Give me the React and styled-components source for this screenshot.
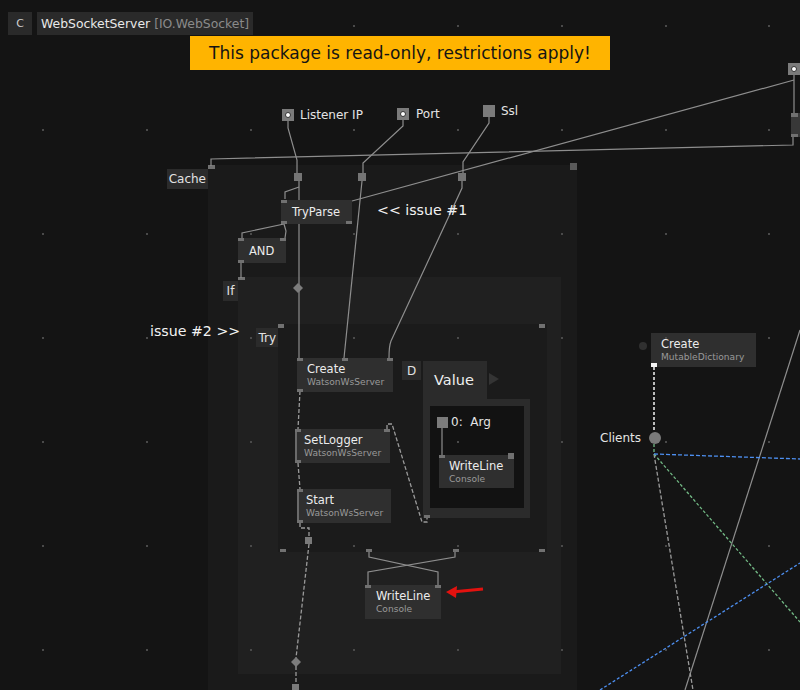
import React from 'react';
import styled, { createGlobalStyle } from 'styled-components';

const GlobalStyle = createGlobalStyle`
  html, body {
    margin: 0;
    padding: 0;
    background: #141414;
  }
  body {
    font-family: "DejaVu Sans", "Liberation Sans", sans-serif;
  }
`;

// ---- page / header ----

const Canvas = styled.div`
  position: relative;
  width: 800px;
  height: 690px;
  overflow: hidden;
  background: #141414;
  display: flex;
  flex-direction: column;
`;

const Header = styled.div`
  position: relative;
  z-index: 3;
  display: flex;
  gap: 5px;
  padding: 12px 8px 0;
`;

const ClassTag = styled.div`
  width: 24px;
  height: 23px;
  background: #2a2a2a;
  color: #cfcfcf;
  font-size: 11px;
  display: flex;
  align-items: center;
  justify-content: center;
`;

const TitleTag = styled.div`
  height: 23px;
  padding: 0 4px;
  background: #2a2a2a;
  color: #e8e8e8;
  font-size: 12.4px;
  display: flex;
  align-items: center;
  white-space: nowrap;

  span {
    color: #8a8a8a;
    margin-left: 4px;
  }
`;

const BannerRow = styled.div`
  position: relative;
  z-index: 3;
  display: flex;
  justify-content: center;
  margin-top: 1px;
`;

const Banner = styled.div`
  height: 34px;
  padding: 0 19px;
  background: #ffb400;
  color: #141414;
  font-size: 17px;
  display: flex;
  align-items: center;
  white-space: nowrap;
`;

// ---- regions (nested, laid out by padding) ----

const CacheRegion = styled.div`
  position: absolute;
  left: 208px;
  top: 165px;
  width: 369px;
  height: 540px;
  box-sizing: border-box;
  padding: 112px 0 0 30px;
  background: #1a1a1a;
`;

const IfRegion = styled.div`
  position: relative;
  width: 323px;
  height: 397px;
  box-sizing: border-box;
  padding: 47px 0 0 40px;
  background: #202020;
`;

const TryRegion = styled.div`
  position: relative;
  width: 269px;
  height: 228px;
  background: #1b1b1b;
`;

const RegionLabel = styled.div`
  position: absolute;
  right: 100%;
  top: 4px;
  height: ${p => p.$h || 20}px;
  min-width: 15px;
  padding: 0 ${p => p.$pad ?? 3}px;
  box-sizing: border-box;
  background: #2b2b2b;
  color: #e2e2e2;
  font-size: 12px;
  display: flex;
  align-items: center;
  justify-content: center;
`;

const EdgePins = styled.div`
  position: absolute;
  left: 0;
  right: 0;
  ${p => (p.$bottom ? 'bottom: 0;' : 'top: 0;')}
  padding: 0 ${p => p.$padR ?? 0}px 0 ${p => p.$padL ?? 0}px;
  display: flex;
  justify-content: ${p => p.$justify || 'space-between'};
  align-items: ${p => (p.$bottom ? 'flex-end' : 'flex-start')};
`;

const Pin = styled.div`
  flex: none;
  width: ${p => p.$w || 6}px;
  height: ${p => p.$h || 3}px;
  margin-top: ${p => p.$lift || 0}px;
  background: ${p => p.$c || '#717171'};
`;

const LoosePin = styled(Pin)`
  position: absolute;
  left: ${p => p.$x}px;
  top: ${p => p.$y}px;
`;

const ValueRow = styled.div`
  position: absolute;
  left: 124px;
  top: 37px;
  display: flex;
  align-items: flex-start;
  gap: 2px;
`;

const DefTag = styled.div`
  width: 19px;
  height: 19px;
  background: #2b2b2b;
  color: #e2e2e2;
  font-size: 12px;
  display: flex;
  align-items: center;
  justify-content: center;
`;

const ValueBox = styled.div`
  display: flex;
  flex-direction: column;
`;

const ValueHead = styled.div`
  position: relative;
  width: 64px;
  height: 38px;
  box-sizing: border-box;
  padding-left: 11px;
  background: #2b2b2b;
  color: #efefef;
  font-size: 14.5px;
  display: flex;
  align-items: center;

  &::after {
    content: '';
    position: absolute;
    left: 66px;
    top: 12px;
    border-left: 10px solid #343434;
    border-top: 6px solid transparent;
    border-bottom: 6px solid transparent;
  }
`;

const ValueFrame = styled.div`
  position: relative;
  width: 107px;
  height: 119px;
  box-sizing: border-box;
  padding: 7px 6px 10px 7px;
  background: #2b2b2b;
`;

const ValueInner = styled.div`
  width: 100%;
  height: 100%;
  background: #121212;
`;

// ---- nodes and pads on the canvas ----

const Node = styled.div`
  position: absolute;
  left: ${p => p.$x}px;
  top: ${p => p.$y}px;
  width: ${p => p.$w}px;
  height: ${p => p.$h}px;
  background: ${p => p.$bg || '#2f2f2f'};
  box-sizing: border-box;
  padding-left: ${p => p.$pad ?? 10}px;
  box-shadow: ${p => (p.$bar ? 'inset 2px 0 0 #6a6a6a' : 'none')};
  display: flex;
  flex-direction: column;
  justify-content: center;
`;

const NodeTitle = styled.div`
  font-size: 11.5px;
  line-height: 14px;
  color: #ececec;
  white-space: nowrap;
`;

const NodeSub = styled.div`
  font-size: 9.1px;
  line-height: 12px;
  color: #9a9a9a;
  white-space: nowrap;
`;

const PadGroup = styled.div`
  position: absolute;
  left: ${p => p.$x}px;
  top: ${p => p.$y}px;
  display: flex;
  align-items: center;
  gap: ${p => p.$gap ?? 6}px;
  color: #e4e4e4;
  font-size: 12px;
  white-space: nowrap;
`;

const Pad = styled.div`
  width: ${p => p.$s || 12}px;
  height: ${p => p.$s || 12}px;
  background: #7b7b7b;
  display: flex;
  align-items: center;
  justify-content: center;
  flex: none;

  &::after {
    content: '';
    display: ${p => (p.$dot ? 'block' : 'none')};
    width: 4px;
    height: 4px;
    border-radius: 50%;
    background: #fff;
    border: 1px solid #333;
  }
`;

const Bullet = styled.div`
  width: 12px;
  height: 12px;
  border-radius: 50%;
  background: #7a7a7a;
`;

const Note = styled.div`
  position: absolute;
  left: ${p => p.$x}px;
  top: ${p => p.$y}px;
  color: #f2f2f2;
  font-size: 14.2px;
  white-space: nowrap;
`;

const Layer = styled.svg`
  position: absolute;
  left: 0;
  top: 0;
  width: 800px;
  height: 690px;
  pointer-events: none;
`;

// ---- data ----

const P = {};
const BIG = { lift: -2, h: 6 };
const WHITE = { h: 4, c: '#f4f4f4' };

const nodes = [
  { x: 281, y: 200, w: 71, h: 24, pad: 11, title: 'TryParse', top: [P], bottom: [P, P] },
  { x: 238, y: 238, w: 48, h: 25, pad: 11, title: 'AND', top: [P, P], bottom: [P] },
  { x: 297, y: 358, w: 96, h: 34, title: 'Create', sub: 'WatsonWsServer', top: [P, P, P], bottom: [P] },
  { x: 295, y: 429, w: 95, h: 34, pad: 9, bar: true, title: 'SetLogger', sub: 'WatsonWsServer', top: [P, P], bottom: [P] },
  { x: 297, y: 489, w: 94, h: 34, pad: 9, bar: true, title: 'Start', sub: 'WatsonWsServer', top: [P], bottom: [P] },
  { x: 439, y: 455, w: 75, h: 33, title: 'WriteLine', sub: 'Console', top: [P, BIG] },
  { x: 365, y: 585, w: 76, h: 34, pad: 11, title: 'WriteLine', sub: 'Console', top: [P, P] },
  { x: 651, y: 333, w: 105, h: 34, title: 'Create', sub: 'MutableDictionary', bottom: [WHITE] },
  { x: 791, y: 113, w: 12, h: 24, pad: 0, bg: '#383838', top: [{ w: 7, h: 4 }], bottom: [{ w: 7 }] },
];

const loosePins = [
  [294, 173, 8, 8, '#757575'], [358, 173, 8, 8, '#757575'], [458, 173, 8, 8, '#757575'],
  [305, 537, 7, 7, '#7a7a7a'], [292, 684, 7, 7, '#7a7a7a'],
];

const solidLinks = [
  'M288,120 V128 L297,160 V173',
  'M299,181 V358',
  'M299,187 L285,192 V199',
  'M403,120 V126 L363,163 V173',
  'M362,181 L344,358',
  'M489,116 V123 L463,162 V173',
  'M462,181 V188 L391,341 Q389,346 389,358',
  'M284,224 L286,231 L285,238',
  'M284,224 L242,233 V238',
  'M241,263 V278',
  'M352,201 L794,80',
  'M794,75 V113',
  'M211,166 V159 L793,145 V137',
  'M369,552 V557 L438,572 V585',
  'M455,552 V557 L368,572 V585',
  'M442,427 V455',
  'M800,330 L685,690',
];

const dashedLinks = [
  'M300,391 L298,429',
  'M298,463 L300,489',
  'M300,523 V528 H309 V537',
  'M309,544 L296,658',
  'M296,666 V684',
  'M387,429 V424 H392 L422,522 H427 V518',
  'M654,454 L693,690',
];

const cols = Array.from({ length: 8 }, (_, i) => Math.round(43 + i * 103.75));
const rows = Array.from({ length: 7 }, (_, j) => 26 + j * 104);

const pinRow = (list, bottom) => (
  <EdgePins $bottom={bottom} $justify={list.length === 1 ? 'flex-start' : 'space-between'}>
    {list.map((p, i) => (
      <Pin key={i} $w={p.w} $h={p.h} $c={p.c} $lift={p.lift} />
    ))}
  </EdgePins>
);

function App() {
  return (
    <>
      <GlobalStyle />
      <Canvas>
        <Header>
          <ClassTag>C</ClassTag>
          <TitleTag>
            WebSocketServer<span>[IO.WebSocket]</span>
          </TitleTag>
        </Header>
        <BannerRow>
          <Banner>This package is read-only, restrictions apply!</Banner>
        </BannerRow>

        <CacheRegion>
          <RegionLabel $pad={2}>Cache</RegionLabel>
          <EdgePins>
            <Pin $w={7} $h={4} />
            <Pin $w={7} $h={7} $lift={-2} $c="#5a5a5a" />
          </EdgePins>
          <IfRegion>
            <RegionLabel $pad={0}>If</RegionLabel>
            <EdgePins $justify="flex-start">
              <Pin $w={7} />
            </EdgePins>
            <TryRegion>
              <RegionLabel $h={19} $pad={2}>Try</RegionLabel>
              <EdgePins $padR={2}>
                <Pin $h={4} />
                <Pin $h={4} />
              </EdgePins>
              <EdgePins $bottom $padL={2} $padR={2}>
                <Pin /><Pin /><Pin /><Pin />
              </EdgePins>
              <ValueRow>
                <DefTag>D</DefTag>
                <ValueBox>
                  <ValueHead>Value</ValueHead>
                  <ValueFrame>
                    <ValueInner />
                    <EdgePins $bottom $padL={1} $justify="flex-start">
                      <Pin />
                    </EdgePins>
                  </ValueFrame>
                </ValueBox>
              </ValueRow>
            </TryRegion>
          </IfRegion>
        </CacheRegion>

        <Layer viewBox="0 0 800 690">
          <g fill="none" stroke="#8e8e8e" strokeWidth="1.2">
            {solidLinks.map((d, i) => <path key={i} d={d} />)}
          </g>
          <g fill="none" stroke="#9a9a9a" strokeWidth="1.3" strokeDasharray="4 2">
            {dashedLinks.map((d, i) => <path key={i} d={d} />)}
          </g>
          <path d="M654,367 V432" stroke="#e8e8e8" strokeWidth="1.6" strokeDasharray="3 2" />
          <g fill="none" strokeWidth="1.3" strokeDasharray="3 2">
            <path d="M654,444 V454 L800,622" stroke="#72b985" />
            <path d="M654,454 L800,459" stroke="#4d8ff0" strokeDasharray="4 2" />
            <path d="M600,690 L800,563" stroke="#4d8ff0" />
          </g>
          <polygon points="298,283 303,288 298,293 293,288" fill="#7c7c7c" />
          <polygon points="296,657 301,662 296,667 291,662" fill="#7c7c7c" />
          <circle cx="643" cy="346" r="4" fill="#303030" />
          <path d="M483,589 L452,592" stroke="#e3120f" strokeWidth="3" />
          <polygon points="446,592 457,586 456,598" fill="#e3120f" />
        </Layer>

        {loosePins.map(([x, y, w, h, c], i) => (
          <LoosePin key={i} $x={x} $y={y} $w={w} $h={h} $c={c} />
        ))}

        {nodes.map((n, i) => (
          <Node key={i} $x={n.x} $y={n.y} $w={n.w} $h={n.h} $pad={n.pad} $bar={n.bar} $bg={n.bg}>
            {n.title && <NodeTitle>{n.title}</NodeTitle>}
            {n.sub && <NodeSub>{n.sub}</NodeSub>}
            {n.top && pinRow(n.top, false)}
            {n.bottom && pinRow(n.bottom, true)}
          </Node>
        ))}

        <PadGroup $x={282} $y={108}><Pad $dot />Listener IP</PadGroup>
        <PadGroup $x={397} $y={107} $gap={7}><Pad $dot />Port</PadGroup>
        <PadGroup $x={483} $y={104}><Pad />Ssl</PadGroup>
        <PadGroup $x={788} $y={63}><Pad $dot /></PadGroup>
        <PadGroup $x={437} $y={415} $gap={3}><Pad $s={11} />0:&nbsp; Arg</PadGroup>
        <PadGroup $x={600} $y={431} $gap={8}>Clients<Bullet /></PadGroup>

        <Note $x={377} $y={202}>&lt;&lt; issue #1</Note>
        <Note $x={150} $y={323}>issue #2 &gt;&gt;</Note>

        <Layer viewBox="0 0 800 690">
          {cols.flatMap(x => rows.map(y => (
            <rect key={`${x}-${y}`} x={x - 1} y={y - 1} width="2" height="2" fill="#4a4a4a" />
          )))}
        </Layer>
      </Canvas>
    </>
  );
}

export default App;
